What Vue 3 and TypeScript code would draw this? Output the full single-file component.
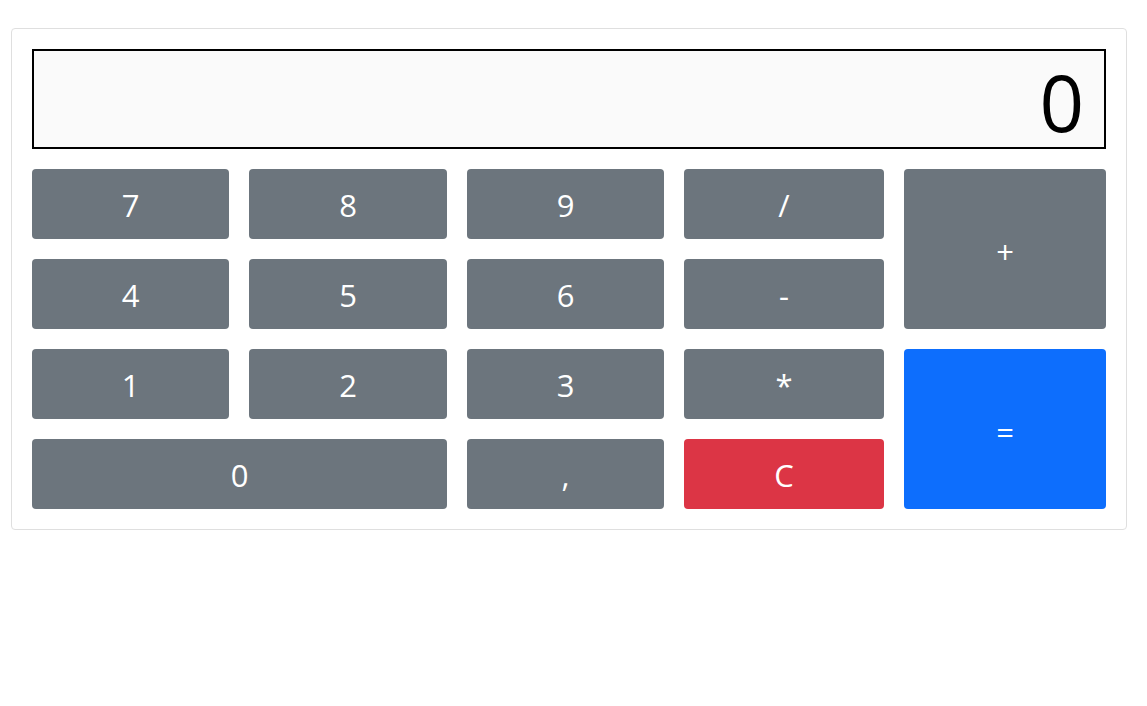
<script setup lang="ts">
import { computed, ref } from 'vue'

interface Key {
  label: string
  area: string
  kind?: 'primary' | 'danger'
  tall?: boolean
}

const keys: Key[] = [
  { label: '7', area: 'seven' },
  { label: '8', area: 'eight' },
  { label: '9', area: 'nine' },
  { label: '/', area: 'divide' },
  { label: '+', area: 'plus', tall: true },
  { label: '4', area: 'four' },
  { label: '5', area: 'five' },
  { label: '6', area: 'six' },
  { label: '-', area: 'minus' },
  { label: '1', area: 'one' },
  { label: '2', area: 'two' },
  { label: '3', area: 'three' },
  { label: '*', area: 'times' },
  { label: '=', area: 'equals', kind: 'primary', tall: true },
  { label: '0', area: 'zero' },
  { label: ',', area: 'comma' },
  { label: 'C', area: 'clear', kind: 'danger' },
]

const entry = ref('0')
const stored = ref<number | null>(null)
const operator = ref('')
const fresh = ref(true)

const value = computed(() => Number(entry.value.replace(',', '.')))

function calculate(a: number, b: number, op: string): number {
  if (op === '+') return a + b
  if (op === '-') return a - b
  if (op === '*') return a * b
  return a / b
}

function resolve() {
  if (stored.value === null || !operator.value) return
  const result = calculate(stored.value, value.value, operator.value)
  entry.value = String(result).replace('.', ',')
}

function press(label: string) {
  if (label === 'C') {
    entry.value = '0'
    stored.value = null
    operator.value = ''
    fresh.value = true
  } else if (label === '=') {
    resolve()
    stored.value = null
    operator.value = ''
    fresh.value = true
  } else if (['+', '-', '*', '/'].includes(label)) {
    if (!fresh.value) resolve()
    stored.value = value.value
    operator.value = label
    fresh.value = true
  } else if (label === ',') {
    if (fresh.value) entry.value = '0,'
    else if (!entry.value.includes(',')) entry.value += ','
    fresh.value = false
  } else {
    entry.value = fresh.value || entry.value === '0' ? label : entry.value + label
    fresh.value = false
  }
}
</script>

<template>
  <main class="calculator">
    <input class="display" type="text" aria-label="Result" :value="entry" readonly />
    <button
      v-for="key in keys"
      :key="key.area"
      type="button"
      class="key"
      :class="[key.area, key.kind, { tall: key.tall }]"
      @click="press(key.label)"
    >{{ key.label }}</button>
  </main>
</template>

<style>
body {
  margin: 0;
  background: #fff;
}
</style>

<style scoped>
.calculator {
  display: grid;
  grid-template-columns: 197fr 198fr 197fr 200fr 202fr;
  grid-template-rows: 100px repeat(4, 70px);
  grid-template-areas:
    'display display display display display'
    'seven eight nine divide plus'
    'four five six minus plus'
    'one two three times equals'
    'zero zero comma clear equals';
  gap: 20px;
  margin: 28px 20px 28px 11px;
  padding: 20px;
  border: 1px solid #dfdfdf;
  border-radius: 4px;
  font-family: 'Segoe UI', 'Open Sans', 'Noto Sans', sans-serif;
}

.display {
  grid-area: display;
  box-sizing: border-box;
  width: 100%;
  min-width: 0;
  margin: 0;
  padding: 6px 20px 0;
  border: 2px solid #000;
  border-radius: 0;
  outline: none;
  background: #fafafa;
  color: #000;
  font-family: inherit;
  font-size: 78px;
  line-height: 90px;
  text-align: right;
}

.key {
  min-width: 0;
  margin: 0;
  padding: 2px 0 0;
  border: 0;
  border-radius: 4px;
  background: #6c757d;
  color: #fff;
  font-family: inherit;
  font-size: 31px;
  line-height: 48px;
  text-align: center;
  cursor: pointer;
}

.tall {
  padding-top: 6px;
}

.primary {
  background: #0d6efd;
}

.danger {
  background: #dc3545;
}

.seven { grid-area: seven; }
.eight { grid-area: eight; }
.nine { grid-area: nine; }
.divide { grid-area: divide; }
.plus { grid-area: plus; }
.four { grid-area: four; }
.five { grid-area: five; }
.six { grid-area: six; }
.minus { grid-area: minus; }
.one { grid-area: one; }
.two { grid-area: two; }
.three { grid-area: three; }
.times { grid-area: times; }
.equals { grid-area: equals; }
.zero { grid-area: zero; }
.comma { grid-area: comma; }
.clear { grid-area: clear; }
</style>
